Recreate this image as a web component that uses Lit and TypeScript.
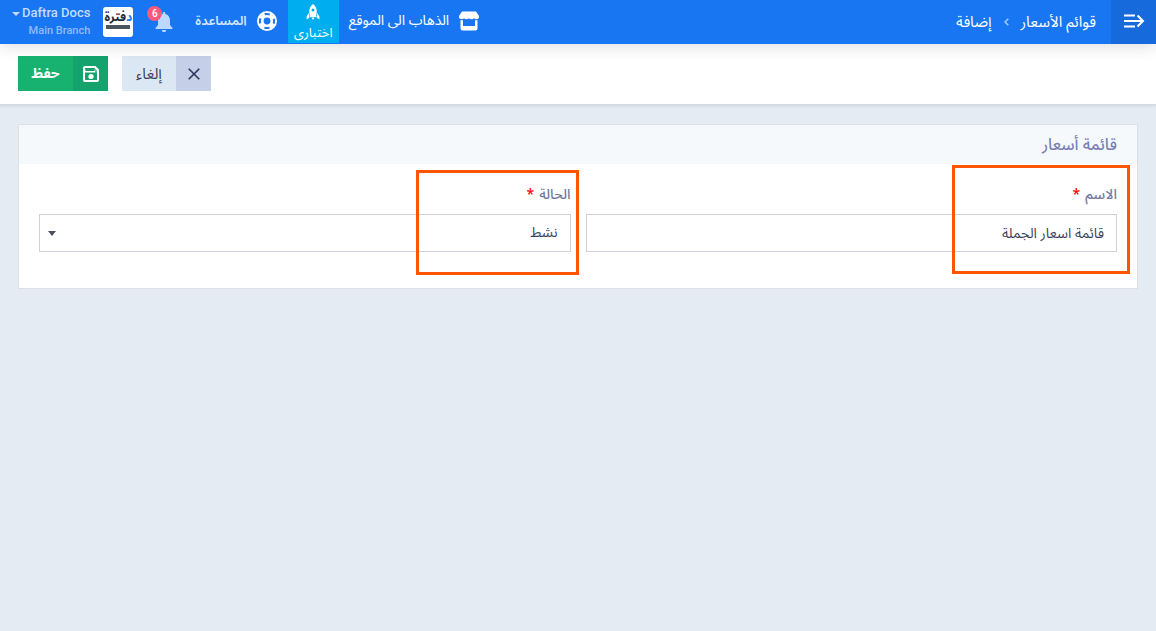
import { LitElement, html, css, svg } from "lit";
import { customElement, property, state } from "lit/decorators.js";

const menuIcon = svg`<svg width="22" height="14" viewBox="0 0 22 14" fill="none" stroke="#fff" stroke-width="2"><path d="M1 1.500H12M1 7H20M1 12.500H12M14.500 1.500L20 7L14.500 12.500"/></svg>`;
const storeIcon = svg`<svg width="20" height="20" viewBox="0 0 20 20" fill="#fff"><path d="M3 .5H17L20 5V6.500Q19.500 8.300 17.500 8.300Q15.800 8.300 15 7.200Q14.200 8.300 12.500 8.300Q10.800 8.300 10 7.200Q9.200 8.300 7.500 8.300Q5.800 8.300 5 7.200Q4.200 8.300 2.500 8.300Q.5 8.300 0 6.500V5Z"/><path d="M1.500 9.300H4V15H16V9.300H18.500V17.500A2 2 0 0 1 16.500 19.500H3.500A2 2 0 0 1 1.500 17.500Z"/></svg>`;
const rocketIcon = svg`<svg width="14" height="16" viewBox="0 0 14 16" fill="#fff"><path fill-rule="evenodd" d="M7 0C9.800 2.200 11 5 10.700 8.500L10 13H4L3.300 8.500C3 5 4.200 2.200 7 0ZM7 4.400A1.500 1.500 0 1 0 7 7.400A1.500 1.500 0 0 0 7 4.400Z"/><path d="M2.800 9L0.600 12.400V15.500L3.500 13.500ZM11.200 9L13.400 12.400V15.500L10.500 13.500ZM5.300 13.500H8.700L7 16Z"/></svg>`;
const helpIcon = svg`<svg width="20" height="20" viewBox="0 0 20 20" fill="none"><circle cx="10" cy="10" r="10" fill="#fff"/><circle cx="10" cy="10" r="7.100" stroke="#1976f3" stroke-width="2" stroke-dasharray="5.200 5.952" stroke-dashoffset="2.600"/><circle cx="10" cy="10" r="3.400" fill="#1976f3"/></svg>`;
const bellIcon = svg`<svg width="18" height="20" viewBox="0 0 18 20" fill="#bcd8fc"><path d="M9 0A1.300 1.300 0 0 1 10.300 1.400V2C13.200 2.700 15 5 15 8V13L17.500 16V17H.5V16L3 13V8C3 5 4.800 2.700 7.700 2V1.400A1.300 1.300 0 0 1 9 0ZM6.800 18H11.200A2.200 2.200 0 0 1 6.800 18Z"/></svg>`;
const saveIcon = svg`<svg width="16" height="16" viewBox="0 0 16 16" fill="none"><path d="M2 1H12L15 4V14Q15 15 14 15H2Q1 15 1 14V2Q1 1 2 1Z" stroke="#fff" stroke-width="2" stroke-linejoin="round"/><path d="M2 5.500H12V6.500H14V3L12 1.500V3H2Z" fill="#fff" opacity=".35"/><path d="M3 3H11V5H3Z" fill="#14a36c"/><path d="M2 5H12V6.500H2Z" fill="#fff"/><circle cx="8" cy="10.500" r="2.600" fill="#fff"/></svg>`;
const closeIcon = svg`<svg width="12" height="12" viewBox="0 0 12 12" fill="none" stroke="#2f3358" stroke-width="1.600"><path d="M.7.7L11.300 11.300M11.300.7L.7 11.300"/></svg>`;

@customElement("top-bar")
export class TopBar extends LitElement {
  @property({ type: Number }) notifications = 0;

  static styles = css`
    :host { display: block; position: relative; z-index: 1; }
    .bar { display: flex; height: 44px; background: #1976f3; color: #fff; box-shadow: 0 2px 16px rgba(0, 0, 0, 0.14); font-size: 14px; line-height: 20px; }
    button { font: inherit; color: inherit; border: 0; padding: 0; background: none; cursor: pointer; }
    a { color: inherit; text-decoration: none; }
    svg { display: block; flex: none; }
    .toggle { width: 45px; display: grid; place-items: center; background: #176adb; padding-bottom: 2px; }
    .crumbs { display: flex; align-items: center; gap: 12px; padding-inline-start: 15px; flex: 1; white-space: nowrap; font-size: 15px; }
    .tools { display: flex; direction: rtl; white-space: nowrap; }
    .link { display: flex; align-items: center; gap: 10px; padding-inline: 10px; padding-bottom: 2px; }
    .trial { width: 51px; height: 43px; box-sizing: border-box; padding-top: 4px; display: flex; flex-direction: column; align-items: center; background: #00aeef; gap: 3px; font-size: 13px; }
    .help { padding-inline: 11px 20px; font-size: 13px; font-weight: 600; color: #d3e5fd; }
    .bell { position: relative; width: 26px; margin-inline: 2px 14px; display: flex; align-items: center; }
    .badge { position: absolute; left: 0; top: 6px; width: 15px; height: 15px; border-radius: 50%; background: #fb5a7c; color: #fff; font: 500 10px/15px Roboto, sans-serif; text-align: center; }
    .account { display: flex; align-items: center; gap: 13px; padding-inline-end: 12px; direction: rtl; }
    .logo { width: 30px; height: 30px; border-radius: 3px; background: #fff; display: flex; flex-direction: column; align-items: center; color: #1d2936; font-size: 12px; font-weight: bold; line-height: 14px; padding-top: 4px; box-sizing: border-box; }
    .logo .accent { color: #1976f3; }
    .strip { width: 24px; height: 4px; background: #4a5560; }
    .user { direction: ltr; text-align: right; font-family: Roboto, sans-serif; font-weight: 500; line-height: 17px; color: #c2dbfc; padding-bottom: 2px; }
    .name { font-size: 13px; display: flex; align-items: center; gap: 2px; }
    .caret { border: 4px solid transparent; border-top-color: #c2dbfc; border-bottom: 0; margin-top: 4px; }
    .branch { font-size: 11px; color: #8dbcfb; }
  `;

  render() {
    return html`<header class="bar">
      <button class="toggle" aria-label="القائمة">${menuIcon}</button>
      <nav class="crumbs">
        <a href="#">قوائم الأسعار</a>
        <svg width="5" height="8" viewBox="0 0 5 8" fill="none" stroke="#a3c8fa" stroke-width="1.500"><path d="M4.300.7L1 4L4.300 7.300" /></svg>
        <span>إضافة</span>
      </nav>
      <div class="tools">
        <a class="link" href="#">${storeIcon}<span>الذهاب الى الموقع</span></a>
        <a class="trial" href="#">${rocketIcon}<span>اختبارى</span></a>
        <a class="link help" href="#">${helpIcon}<span>المساعدة</span></a>
        <button class="bell" aria-label="الإشعارات">${bellIcon}<span class="badge">${this.notifications}</span></button>
        <button class="account">
          <span class="logo"><span><span class="accent">د</span>فترة</span><span class="strip"></span></span>
          <span class="user"><span class="name"><span class="caret"></span>Daftra Docs</span><span class="branch">Main Branch</span></span>
        </button>
      </div>
    </header>`;
  }
}

@customElement("app-root")
export class AppRoot extends LitElement {
  @state() private name = "قائمة اسعار الجملة";

  static styles = css`
    :host { display: block; min-height: 100vh; direction: rtl; background: #e4ebf3; color: #3b3f5c; font-family: "Noto Sans Arabic", "Noto Kufi Arabic", "DejaVu Sans", sans-serif; font-size: 14px; line-height: 20px; }
    button, input, select { font: inherit; color: inherit; border-radius: 0; }
    .actions { display: flex; direction: ltr; gap: 14px; padding: 12px 18px 13px; background: #fff; border-bottom: 1px solid #d3dbe4; box-shadow: 0 1px 3px rgba(40, 60, 90, 0.12); }
    .action { display: flex; height: 35px; border: 0; padding: 0; cursor: pointer; }
    .caption { display: grid; place-items: center; height: 35px; width: 54px; }
    .icon { display: grid; place-items: center; height: 35px; width: 35px; }
    .save { background: #17b26f; color: #fff; font-weight: bold; }
    .save .caption { width: 55px; }
    .save .icon { background: #14a36c; }
    .cancel { background: #dbe7f3; font-size: 15px; }
    .cancel .icon { background: #c5d0e8; }
    .card { margin: 19px 18px; background: #fff; border: 1px solid #dce0e6; }
    .title { margin: 0; padding: 10px 20px 9px; background: #f5f9fc; color: #7b7fb5; font-size: 16px; font-weight: 500; }
    .fields { display: grid; grid-template-columns: 1fr 1fr; gap: 15px; padding: 21px 20px 36px; }
    .field { position: relative; display: flex; flex-direction: column; gap: 9px; }
    .label { color: #7477a0; font-weight: 500; font-size: 14px; }
    .required { color: #f00; margin-inline-start: 5px; }
    .control { width: 100%; height: 38px; box-sizing: border-box; border: 1px solid #cdd1d8; background: #fff; padding: 0 12px; outline: 0; appearance: none; }
    .picker { position: relative; display: flex; }
    .arrow { position: absolute; left: 9px; top: 17px; border: 4px solid transparent; border-top: 5px solid #475061; border-bottom: 0; pointer-events: none; }
    .mark { position: absolute; box-sizing: border-box; border: 3px solid #ff5500; pointer-events: none; }
    .mark-name { right: -13px; top: -20px; width: 178px; height: 109px; }
    .mark-status { right: -8px; top: -15px; width: 163px; height: 105px; }
  `;

  render() {
    return html`
      <top-bar .notifications=${6}></top-bar>
      <div class="actions">
        <button class="action save"><span class="caption">حفظ</span><span class="icon">${saveIcon}</span></button>
        <button class="action cancel"><span class="caption">إلغاء</span><span class="icon">${closeIcon}</span></button>
      </div>
      <main class="card">
        <h1 class="title">قائمة أسعار</h1>
        <form class="fields" @submit=${(e: Event) => e.preventDefault()}>
          <div class="field">
            <label class="label" for="name">الاسم<span class="required">*</span></label>
            <input class="control" id="name" .value=${this.name} @input=${(e: Event) => (this.name = (e.target as HTMLInputElement).value)} />
            <span class="mark mark-name"></span>
          </div>
          <div class="field">
            <label class="label" for="status">الحالة<span class="required">*</span></label>
            <div class="picker">
              <select class="control" id="status"><option>نشط</option></select>
              <span class="arrow"></span>
            </div>
            <span class="mark mark-status"></span>
          </div>
        </form>
      </main>
    `;
  }
}
